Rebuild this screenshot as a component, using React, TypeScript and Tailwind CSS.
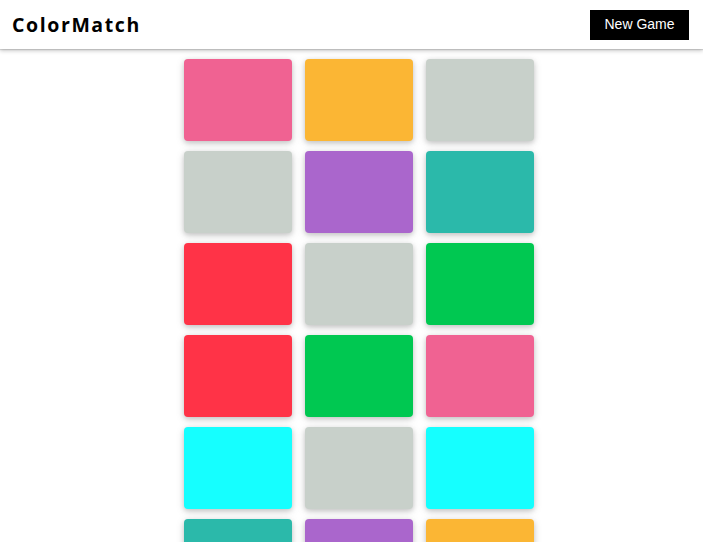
import React from "react";

const colors = [
  "#F06292", "#FBB634", "#C8D0CA",
  "#C8D0CA", "#AA66CC", "#2BB9AA",
  "#FF3347", "#C8D0CA", "#00C851",
  "#FF3347", "#00C851", "#F06292",
  "#15FFFF", "#C8D0CA", "#15FFFF",
  "#2BB9AA", "#AA66CC", "#FBB634",
];

export default function App() {
  return (
    <div className="w-full bg-white overflow-hidden h-[542px]">
      <header className="h-[49px] flex items-center justify-between pl-[12px] pr-[14px] bg-white shadow-[0_2px_4px_rgba(0,0,0,0.2),0_1px_1px_rgba(0,0,0,0.12)] relative z-10">
        <h1 className="text-[19.5px] font-bold tracking-[1.6px] text-black" style={{ fontFamily: '"Open Sans", sans-serif' }}>
          ColorMatch
        </h1>
        <button className="w-[99px] h-[30px] bg-black text-white text-[14px]" style={{ fontFamily: '"Liberation Sans", Arial, sans-serif' }}>
          New Game
        </button>
      </header>
      <div className="flex justify-center pl-[15px] pt-[10px]">
        <div className="grid grid-cols-[108px_108px_108px] gap-x-[13px] gap-y-[10px]">
          {colors.map((c, i) => (
            <div
              key={i}
              className="h-[82px] rounded-[4px] shadow-[0_2px_5px_rgba(0,0,0,0.16),0_2px_10px_rgba(0,0,0,0.12)]"
              style={{ backgroundColor: c }}
            />
          ))}
        </div>
      </div>
    </div>
  );
}
